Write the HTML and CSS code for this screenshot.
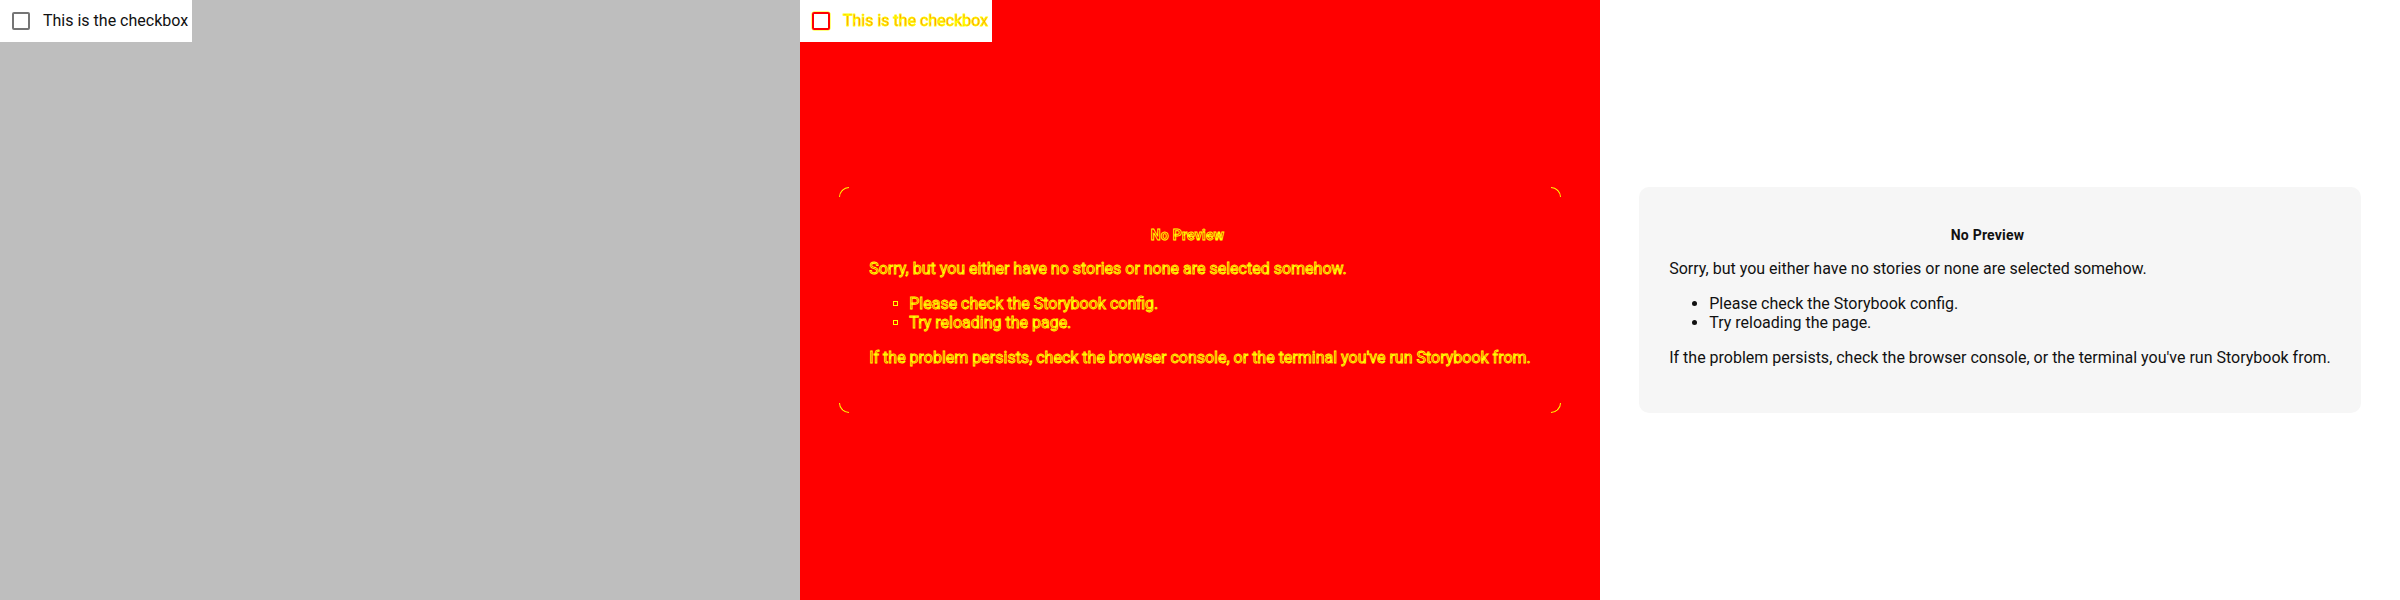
FILE: index.html
```html
<!DOCTYPE html>
<html lang="en">
<head>
<meta charset="utf-8">
<title>Checkbox snapshot diff</title>
<link rel="stylesheet" href="styles.css">
</head>
<body>
<div class="strip">
  <section class="panel panel-expected">
    <label class="check">
      <span class="box"></span>
      <span class="check-text">This is the checkbox</span>
    </label>
  </section>

  <section class="panel panel-diff">
    <label class="check check-diff">
      <span class="box"></span>
      <span class="check-text">This is the checkbox</span>
    </label>
    <div class="nopreview nopreview-diff">
      <span class="corner tl"></span>
      <span class="corner tr"></span>
      <span class="corner bl"></span>
      <span class="corner br"></span>
      <h1 class="np-heading">No Preview</h1>
      <p>Sorry, but you either have no stories or none are selected somehow.</p>
      <ul>
        <li>Please check the Storybook config.</li>
        <li>Try reloading the page.</li>
      </ul>
      <p>If the problem persists, check the browser console, or the terminal you've run Storybook from.</p>
    </div>
  </section>

  <section class="panel panel-received">
    <div class="nopreview">
      <h1 class="np-heading">No Preview</h1>
      <p>Sorry, but you either have no stories or none are selected somehow.</p>
      <ul>
        <li>Please check the Storybook config.</li>
        <li>Try reloading the page.</li>
      </ul>
      <p>If the problem persists, check the browser console, or the terminal you've run Storybook from.</p>
    </div>
  </section>
</div>
</body>
</html>
```

FILE: styles.css
```css
html, body {
  margin: 0;
  padding: 0;
}

body {
  width: 2400px;
  height: 600px;
  overflow: hidden;
  font-family: Roboto, "Liberation Sans", sans-serif;
  background: #ffffff;
}

.strip {
  display: flex;
  width: 2400px;
  height: 600px;
}

.panel {
  flex: none;
  width: 800px;
  height: 600px;
  display: grid;
  grid-template-columns: 1fr;
  grid-template-rows: 1fr;
}

.panel > * {
  grid-area: 1 / 1;
}

.panel-expected {
  background: #bebebe;
}

.panel-diff {
  background: #ff0000;
}

.panel-received {
  background: #ffffff;
}

/* checkbox label */
.check {
  align-self: start;
  justify-self: start;
  display: flex;
  align-items: center;
  box-sizing: border-box;
  width: 192px;
  height: 42px;
  padding-left: 12px;
  background: #ffffff;
  font-size: 16px;
  line-height: 18px;
  color: #111111;
  white-space: nowrap;
}

.box {
  flex: none;
  box-sizing: border-box;
  width: 18px;
  height: 18px;
  margin-right: 13px;
  border: 2px solid #757575;
  border-radius: 2px;
}

.check-diff .box {
  border-color: #ff0000;
  box-shadow: 0 0 0 0.5px #ffff00;
}

.check-diff .check-text {
  color: #ff0000;
  -webkit-text-stroke: 0.9px #ffff00;
}

/* no preview card */
.nopreview {
  align-self: center;
  justify-self: center;
  position: relative;
  box-sizing: border-box;
  padding: 30px;
  border-radius: 10px;
  background: #f6f6f6;
  font-size: 16px;
  line-height: normal;
  color: #111111;
  white-space: nowrap;
}

.np-heading {
  margin: 10px 0;
  padding-right: 25px;
  text-align: center;
  font-size: 14px;
  font-weight: 700;
  letter-spacing: 0.2px;
  line-height: normal;
}

.nopreview p {
  margin: 16px 0;
}

.nopreview ul {
  margin: 16px 0;
  padding-left: 40px;
}

/* diff version of card */
.nopreview-diff {
  background: transparent;
  color: #ff0000;
  -webkit-text-stroke: 0.9px #ffff00;
}

.nopreview-diff ul {
  list-style: none;
}

.nopreview-diff li {
  position: relative;
}

.nopreview-diff li::before {
  content: "";
  position: absolute;
  left: -16px;
  top: 7px;
  width: 3px;
  height: 3px;
  border: 1px solid #ffff00;
}

.corner {
  position: absolute;
  width: 10px;
  height: 10px;
  box-sizing: border-box;
  border: 0 solid #ffff00;
}

.corner.tl {
  top: 0;
  left: 0;
  border-top-width: 1px;
  border-left-width: 1px;
  border-top-left-radius: 10px;
}

.corner.tr {
  top: 0;
  right: 0;
  border-top-width: 1px;
  border-right-width: 1px;
  border-top-right-radius: 10px;
}

.corner.bl {
  bottom: 0;
  left: 0;
  border-bottom-width: 1px;
  border-left-width: 1px;
  border-bottom-left-radius: 10px;
}

.corner.br {
  bottom: 0;
  right: 0;
  border-bottom-width: 1px;
  border-right-width: 1px;
  border-bottom-right-radius: 10px;
}
```
